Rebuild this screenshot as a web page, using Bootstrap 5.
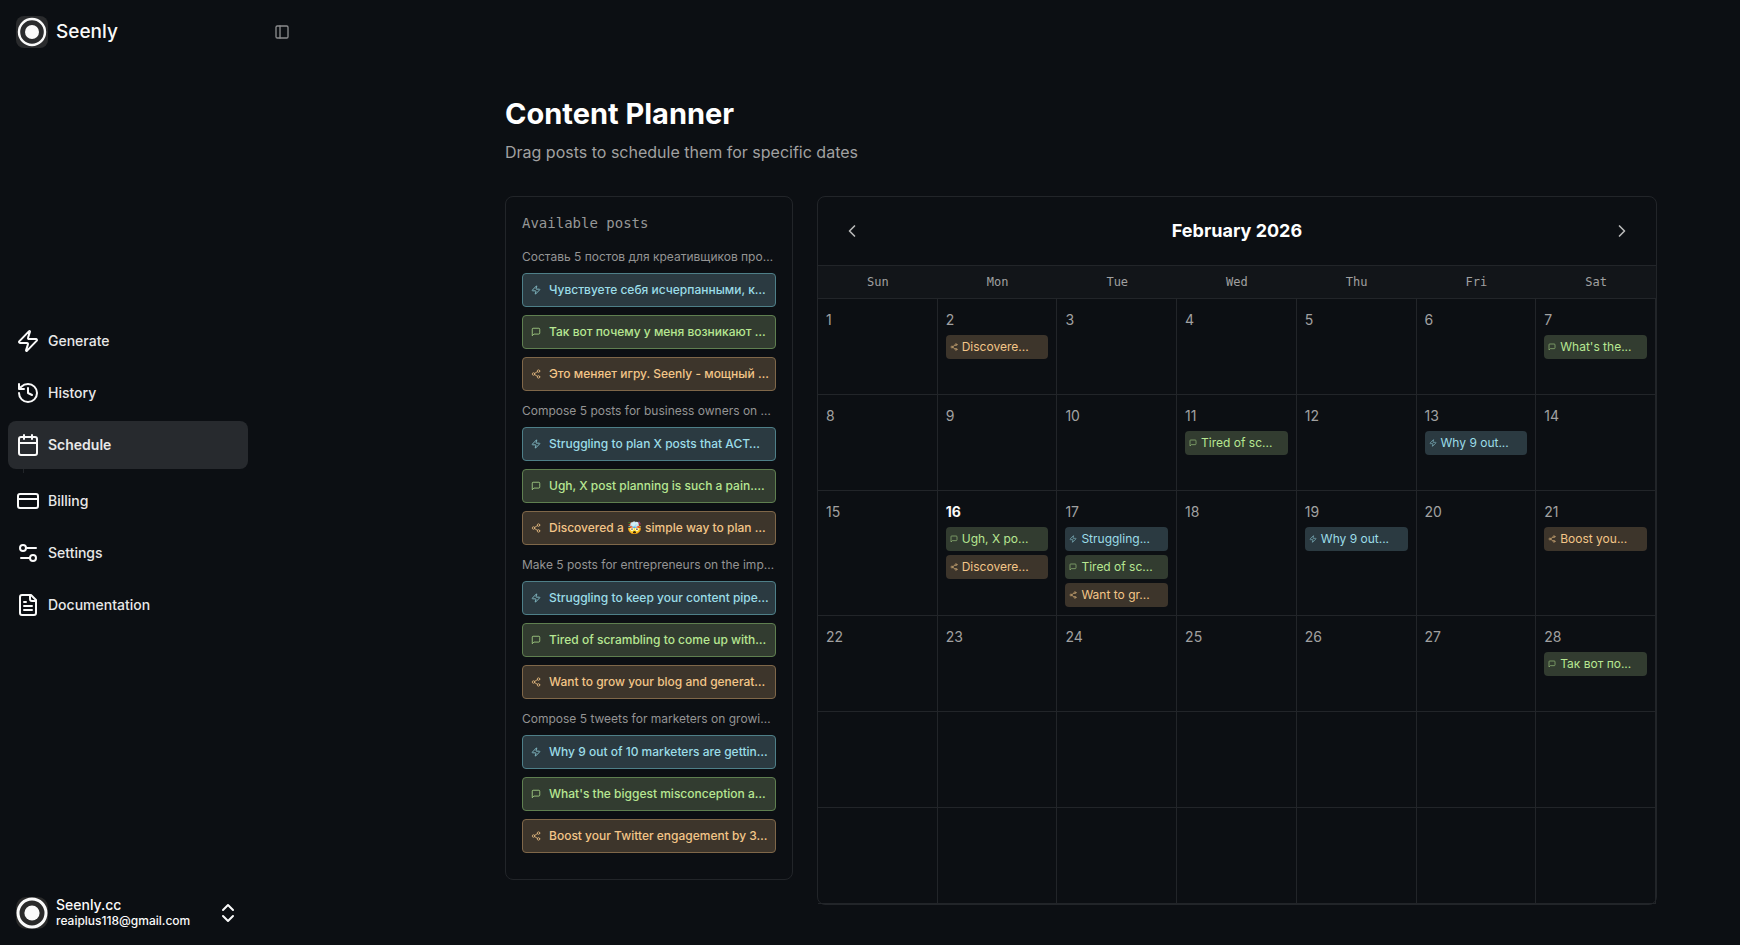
<!DOCTYPE html>
<html lang="en" data-bs-theme="dark">
<head>
<meta charset="utf-8">
<meta name="viewport" content="width=device-width, initial-scale=1">
<title>Seenly – Content Planner</title>
<link href="https://cdn.jsdelivr.net/npm/bootstrap@5.3.0/dist/css/bootstrap.min.css" rel="stylesheet">
<style>
  :root { --ink: #fafafa; --muted: #a1a1a1; --line: #222529; --page: #0c0f13; --raised: #272a2e; }
  body { font-family: Inter, "Noto Sans", sans-serif; background: var(--page); color: var(--ink); }
  a { color: inherit; text-decoration: none; }
  svg { fill: none; stroke: currentColor; stroke-width: 2; stroke-linecap: round; stroke-linejoin: round; flex: none; }
  .mono { font-family: "DejaVu Sans Mono", monospace; }
  .muted { color: var(--muted); }

  .side { width: 256px; flex: none; }
  .logo { width: 32px; height: 32px; }
  .brand-name { font-size: 19px; line-height: 32px; font-weight: 500; }
  .side-link { height: 48px; border-radius: 8px; font-size: 14px; line-height: 20px; font-weight: 500; color: #e8e8e8; }
  .side-link svg { width: 24px; height: 24px; color: var(--ink); }
  .side-link.active { background: var(--raised); font-weight: 600; }
  .side-link:hover { background: var(--raised); }
  .side-rule { height: 4px; width: 1px; margin-left: 15px; background: var(--line); }
  .account-name { font-size: 14px; line-height: 16px; font-weight: 500; }
  .account-mail { font-size: 12px; line-height: 16px; font-weight: 500; }
  .icon-btn { width: 36px; height: 36px; color: #b9b9b9; }
  .icon-btn svg { width: 20px; height: 20px; }
  .topbar { height: 64px; }
  .toggle { width: 28px; height: 28px; color: #8b8c8d; }
  .toggle svg { width: 16px; height: 16px; }

  .main { min-width: 0; }
  .planner { max-width: 1152px; }
  .planner-offset { padding-left: 166px; }
  h1 { font-size: 29px; line-height: 36px; font-weight: 700; }
  .lede { font-size: 16px; line-height: 24px; }
  .panel { border: 1px solid var(--line); border-radius: 8px; }
  .posts { width: 288px; flex: none; padding: 16px 16px 26px; }
  .posts h2 { font-size: 14px; line-height: 20px; font-weight: 400; color: #979797; }
  .posts h3 { font-size: 12px; line-height: 16px; font-weight: 400; color: #949494; }
  .post { height: 34px; padding: 0 8px; border: 1px solid; border-radius: 4px; font-size: 12px; line-height: 16px; font-weight: 500; cursor: grab; }
  .post svg { width: 10px; height: 12px; opacity: .9; }

  .hook  { background: #2b3a41; border-color: #4e7f88 !important; color: #9bdde8; }
  .talk  { background: #323c30; border-color: #5f7f50 !important; color: #b7e792; }
  .share { background: #3d352b; border-color: #7f6749 !important; color: #f3c588; }

  .cal-title { font-size: 18px; line-height: 28px; font-weight: 700; }
  .cal-head { height: 68px; }
  .cal { table-layout: fixed; width: 100%; border-collapse: separate; border-spacing: 0; }
  .cal th { background: #121519; border-top: 1px solid var(--line); border-bottom: 1px solid var(--line); padding: 8px; font-size: 12px; line-height: 16px; font-weight: 400; text-align: center; color: #a0a0a0; }
  .cal td { height: 96px; padding: 8px; vertical-align: top; border: solid var(--line); border-width: 0 1px 1px 0; }
  .day { display: block; font-size: 14px; line-height: 26px; margin-bottom: 2px; color: var(--muted); }
  .today { color: var(--ink); font-weight: 700; }
  .chip { height: 24px; padding: 0 4px; border-radius: 4px; font-size: 12px; line-height: 16px; white-space: nowrap; overflow: hidden; }
  .chip + .chip { margin-top: 4px; }
  .chip svg { width: 8px; height: 8px; opacity: .8; }
</style>
</head>
<body>

<svg class="d-none" aria-hidden="true">
  <symbol id="i-zap" viewBox="0 0 24 24"><path d="M4 14a1 1 0 0 1-.78-1.63l9.9-10.2a.5.5 0 0 1 .86.46l-1.92 6.02A1 1 0 0 0 13 10h7a1 1 0 0 1 .78 1.63l-9.9 10.2a.5.5 0 0 1-.86-.46l1.92-6.02A1 1 0 0 0 11 14z"/></symbol>
  <symbol id="i-msg" viewBox="0 0 24 24"><path d="M21 15a2 2 0 0 1-2 2H7l-4 4V5a2 2 0 0 1 2-2h14a2 2 0 0 1 2 2z"/></symbol>
  <symbol id="i-share" viewBox="0 0 24 24"><circle cx="18" cy="5" r="3"/><circle cx="6" cy="12" r="3"/><circle cx="18" cy="19" r="3"/><path d="M8.59 13.51l6.83 3.98M15.41 6.51l-6.82 3.98"/></symbol>
  <symbol id="i-logo" viewBox="0 0 32 32"><rect width="32" height="32" rx="8" fill="#2a2b2d" stroke="none"/><circle cx="16" cy="16" r="13" stroke="#fafafa" stroke-width="2.4"/><circle cx="16" cy="16" r="7" fill="#fafafa" stroke="none"/></symbol>
  <symbol id="i-logo-round" viewBox="0 0 32 32"><rect width="32" height="32" rx="10" fill="#2a2a2a" stroke="none"/><circle cx="16" cy="16" r="14" stroke="#fafafa" stroke-width="3"/><circle cx="16" cy="16" r="7.6" fill="#fafafa" stroke="none"/></symbol>
</svg>

<div class="d-flex min-vh-100">
  <aside class="side d-flex flex-column">
    <a href="#" class="d-flex align-items-center gap-2 p-3">
      <svg class="logo" aria-hidden="true"><use href="#i-logo"/></svg>
      <span class="brand-name">Seenly</span>
    </a>

    <nav class="d-flex flex-column gap-1 px-2 my-auto" aria-label="Main">
      <a href="#" class="side-link d-flex align-items-center gap-2 px-2"><svg><use href="#i-zap"/></svg>Generate</a>
      <a href="#" class="side-link d-flex align-items-center gap-2 px-2"><svg viewBox="0 0 24 24"><path d="M3 12a9 9 0 1 0 9-9 9.75 9.75 0 0 0-6.74 2.74L3 8M3 3v5h5M12 7v5l4 2"/></svg>History</a>
      <div>
        <a href="#" class="side-link active d-flex align-items-center gap-2 px-2" aria-current="page"><svg viewBox="0 0 24 24"><path d="M8 2v4M16 2v4M3 10h18"/><rect width="18" height="18" x="3" y="4" rx="2"/></svg>Schedule</a>
        <div class="side-rule"></div>
      </div>
      <a href="#" class="side-link d-flex align-items-center gap-2 px-2"><svg viewBox="0 0 24 24"><rect width="20" height="14" x="2" y="5" rx="2"/><path d="M2 10h20"/></svg>Billing</a>
      <a href="#" class="side-link d-flex align-items-center gap-2 px-2"><svg viewBox="0 0 24 24"><path d="M20 7h-9M14 17H5"/><circle cx="17" cy="17" r="3"/><circle cx="7" cy="7" r="3"/></svg>Settings</a>
      <a href="#" class="side-link d-flex align-items-center gap-2 px-2"><svg viewBox="0 0 24 24"><path d="M15 2H6a2 2 0 0 0-2 2v16a2 2 0 0 0 2 2h12a2 2 0 0 0 2-2V7ZM14 2v4a2 2 0 0 0 2 2h4M10 9H8M16 13H8M16 17H8"/></svg>Documentation</a>
    </nav>

    <button type="button" class="btn border-0 rounded-0 text-start text-reset d-flex align-items-center gap-2 p-3" aria-label="Account menu">
      <svg class="logo" aria-hidden="true"><use href="#i-logo-round"/></svg>
      <span class="flex-grow-1">
        <span class="account-name d-block">Seenly.cc</span>
        <span class="account-mail d-block">reaiplus118@gmail.com</span>
      </span>
      <svg width="24" height="24" viewBox="0 0 24 24"><path d="M7 15l5 5 5-5M7 9l5-5 5 5"/></svg>
    </button>
  </aside>

  <main class="main flex-grow-1">
    <header class="topbar d-flex align-items-center px-2 ms-1">
      <button type="button" class="toggle btn border-0 p-0 d-flex align-items-center justify-content-center" aria-label="Toggle sidebar">
        <svg viewBox="0 0 24 24"><rect width="18" height="18" x="3" y="3" rx="2"/><path d="M9 3v18"/></svg>
      </button>
    </header>

    <div class="planner-offset">
      <div class="planner mx-auto pt-4 mt-2">
        <h1 class="mb-2">Content Planner</h1>
        <p class="lede muted mb-0">Drag posts to schedule them for specific dates</p>

        <div class="d-flex align-items-start gap-4 mt-4 pt-2">
          <section class="panel posts">
            <h2 class="mono mb-3">Available posts</h2>
            <div class="d-flex flex-column gap-2">
              <h3 class="text-nowrap mb-0">Составь 5 постов для креативщиков про…</h3>
              <div class="post hook d-flex align-items-center gap-2" draggable="true"><svg><use href="#i-zap"/></svg><span class="text-nowrap">Чувствуете себя исчерпанными, к…</span></div>
              <div class="post talk d-flex align-items-center gap-2" draggable="true"><svg><use href="#i-msg"/></svg><span class="text-nowrap">Так вот почему у меня возникают …</span></div>
              <div class="post share d-flex align-items-center gap-2" draggable="true"><svg><use href="#i-share"/></svg><span class="text-nowrap">Это меняет игру. Seenly - мощный …</span></div>

              <h3 class="text-nowrap mb-0 mt-1">Compose 5 posts for business owners on …</h3>
              <div class="post hook d-flex align-items-center gap-2" draggable="true"><svg><use href="#i-zap"/></svg><span class="text-nowrap">Struggling to plan X posts that ACT…</span></div>
              <div class="post talk d-flex align-items-center gap-2" draggable="true"><svg><use href="#i-msg"/></svg><span class="text-nowrap">Ugh, X post planning is such a pain.…</span></div>
              <div class="post share d-flex align-items-center gap-2" draggable="true"><svg><use href="#i-share"/></svg><span class="text-nowrap">Discovered a 🤯 simple way to plan …</span></div>

              <h3 class="text-nowrap mb-0 mt-1">Make 5 posts for entrepreneurs on the imp…</h3>
              <div class="post hook d-flex align-items-center gap-2" draggable="true"><svg><use href="#i-zap"/></svg><span class="text-nowrap">Struggling to keep your content pipe…</span></div>
              <div class="post talk d-flex align-items-center gap-2" draggable="true"><svg><use href="#i-msg"/></svg><span class="text-nowrap">Tired of scrambling to come up with…</span></div>
              <div class="post share d-flex align-items-center gap-2" draggable="true"><svg><use href="#i-share"/></svg><span class="text-nowrap">Want to grow your blog and generat…</span></div>

              <h3 class="text-nowrap mb-0 mt-1">Compose 5 tweets for marketers on growi…</h3>
              <div class="post hook d-flex align-items-center gap-2" draggable="true"><svg><use href="#i-zap"/></svg><span class="text-nowrap">Why 9 out of 10 marketers are gettin…</span></div>
              <div class="post talk d-flex align-items-center gap-2" draggable="true"><svg><use href="#i-msg"/></svg><span class="text-nowrap">What's the biggest misconception a…</span></div>
              <div class="post share d-flex align-items-center gap-2" draggable="true"><svg><use href="#i-share"/></svg><span class="text-nowrap">Boost your Twitter engagement by 3…</span></div>
            </div>
          </section>

          <section class="panel flex-grow-1">
            <div class="cal-head d-flex align-items-center justify-content-between px-3">
              <button type="button" class="icon-btn btn border-0 p-0 d-flex align-items-center justify-content-center" aria-label="Previous month"><svg viewBox="0 0 24 24"><path d="M15 18l-6-6 6-6"/></svg></button>
              <h2 class="cal-title mb-0">February 2026</h2>
              <button type="button" class="icon-btn btn border-0 p-0 d-flex align-items-center justify-content-center" aria-label="Next month"><svg viewBox="0 0 24 24"><path d="M9 18l6-6-6-6"/></svg></button>
            </div>
            <table class="cal">
              <thead class="mono">
                <tr><th>Sun</th><th>Mon</th><th>Tue</th><th>Wed</th><th>Thu</th><th>Fri</th><th>Sat</th></tr>
              </thead>
              <tbody>
                <tr>
                  <td><span class="day">1</span></td>
                  <td><span class="day">2</span><div class="chip share d-flex align-items-center gap-1"><svg><use href="#i-share"/></svg>Discovere...</div></td>
                  <td><span class="day">3</span></td>
                  <td><span class="day">4</span></td>
                  <td><span class="day">5</span></td>
                  <td><span class="day">6</span></td>
                  <td><span class="day">7</span><div class="chip talk d-flex align-items-center gap-1"><svg><use href="#i-msg"/></svg>What's the...</div></td>
                </tr>
                <tr>
                  <td><span class="day">8</span></td>
                  <td><span class="day">9</span></td>
                  <td><span class="day">10</span></td>
                  <td><span class="day">11</span><div class="chip talk d-flex align-items-center gap-1"><svg><use href="#i-msg"/></svg>Tired of sc...</div></td>
                  <td><span class="day">12</span></td>
                  <td><span class="day">13</span><div class="chip hook d-flex align-items-center gap-1"><svg><use href="#i-zap"/></svg>Why 9 out...</div></td>
                  <td><span class="day">14</span></td>
                </tr>
                <tr>
                  <td><span class="day">15</span></td>
                  <td><span class="day today">16</span><div class="chip talk d-flex align-items-center gap-1"><svg><use href="#i-msg"/></svg>Ugh, X po...</div><div class="chip share d-flex align-items-center gap-1"><svg><use href="#i-share"/></svg>Discovere...</div></td>
                  <td><span class="day">17</span><div class="chip hook d-flex align-items-center gap-1"><svg><use href="#i-zap"/></svg>Struggling...</div><div class="chip talk d-flex align-items-center gap-1"><svg><use href="#i-msg"/></svg>Tired of sc...</div><div class="chip share d-flex align-items-center gap-1"><svg><use href="#i-share"/></svg>Want to gr...</div></td>
                  <td><span class="day">18</span></td>
                  <td><span class="day">19</span><div class="chip hook d-flex align-items-center gap-1"><svg><use href="#i-zap"/></svg>Why 9 out...</div></td>
                  <td><span class="day">20</span></td>
                  <td><span class="day">21</span><div class="chip share d-flex align-items-center gap-1"><svg><use href="#i-share"/></svg>Boost you...</div></td>
                </tr>
                <tr>
                  <td><span class="day">22</span></td>
                  <td><span class="day">23</span></td>
                  <td><span class="day">24</span></td>
                  <td><span class="day">25</span></td>
                  <td><span class="day">26</span></td>
                  <td><span class="day">27</span></td>
                  <td><span class="day">28</span><div class="chip talk d-flex align-items-center gap-1"><svg><use href="#i-msg"/></svg>Так вот по...</div></td>
                </tr>
                <tr><td></td><td></td><td></td><td></td><td></td><td></td><td></td></tr>
                <tr><td></td><td></td><td></td><td></td><td></td><td></td><td></td></tr>
              </tbody>
            </table>
          </section>
        </div>
      </div>
    </div>
  </main>
</div>

<script src="https://cdn.jsdelivr.net/npm/bootstrap@5.3.0/dist/js/bootstrap.bundle.min.js"></script>
</body>
</html>
